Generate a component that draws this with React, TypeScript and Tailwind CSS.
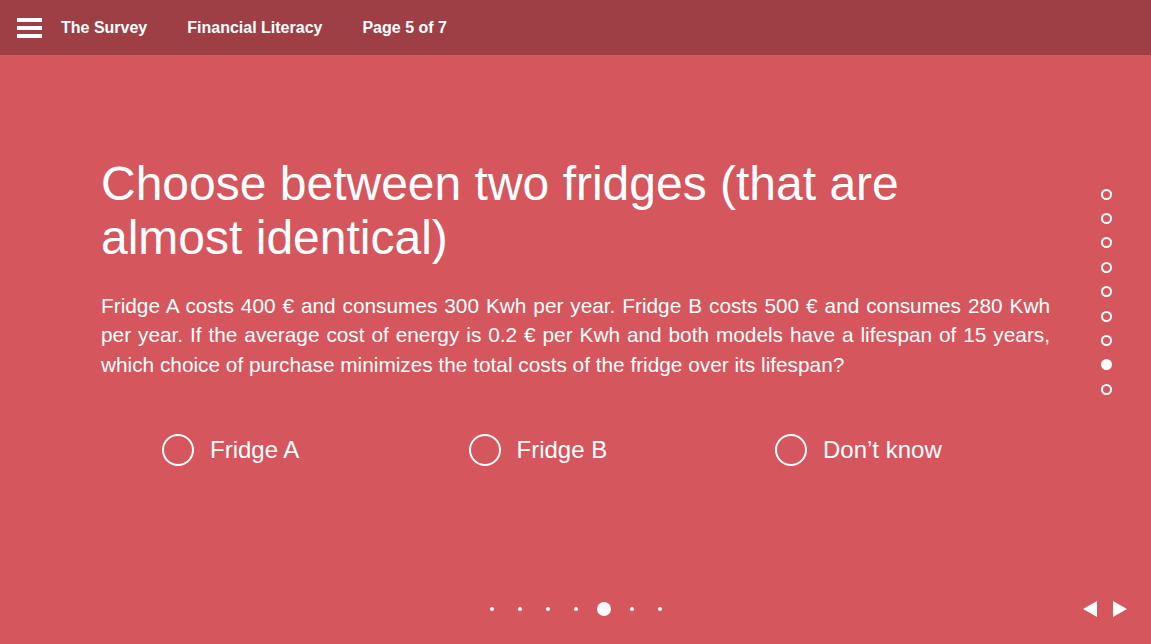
import { useState } from 'react';

const options = ['Fridge A', 'Fridge B', 'Don’t know'];

export default function App() {
  const [selected, setSelected] = useState<number | null>(null);
  const sideDots = 9;
  const activeSide = 7;
  const bottomDots = 7;
  const activeBottom = 4;

  return (
    <div
      className="h-[644px] w-full flex flex-col bg-[#d5565c] text-white overflow-hidden"
      style={{ fontFamily: '"Liberation Sans", Arial, sans-serif' }}
    >
      <header className="h-[55px] shrink-0 bg-[#9e3f46] flex items-center pl-[17px]">
        <button className="flex flex-col gap-[4px] w-[25px]">
          <span className="block h-[4px] w-[25px] bg-white" />
          <span className="block h-[4px] w-[25px] bg-white" />
          <span className="block h-[4px] w-[25px] bg-white" />
        </button>
        <nav className="flex items-center gap-[40px] ml-[19px] text-[16px] font-bold">
          <span>The Survey</span>
          <span>Financial Literacy</span>
          <span>Page 5 of 7</span>
        </nav>
      </header>

      <main className="relative flex-1">
        <section className="px-[101px] pt-[102px]">
          <h1 className="text-[48px] leading-[54px] font-normal">
            Choose between two fridges (that are almost identical)
          </h1>
          <p className="mt-[26px] text-[20.8px] leading-[29.4px] text-justify">
            Fridge A costs 400 € and consumes 300 Kwh per year. Fridge B costs 500 € and consumes 280 Kwh
            per year. If the average cost of energy is 0.2 € per Kwh and both models have a lifespan of 15
            years, which choice of purchase minimizes the total costs of the fridge over its lifespan?
          </p>
          <div className="flex ml-[61px] mt-[55px]">
            {options.map((opt, i) => (
              <label
                key={opt}
                className="w-[306.5px] shrink-0 flex items-center gap-[16px] cursor-pointer"
                onClick={() => setSelected(i)}
              >
                <span className="w-[32px] h-[32px] rounded-full border-2 border-white flex items-center justify-center">
                  {selected === i && <span className="w-[16px] h-[16px] rounded-full bg-white" />}
                </span>
                <span className="text-[24px] leading-[32px]">{opt}</span>
              </label>
            ))}
          </div>
        </section>

        <div className="absolute right-[33px] top-[127px] flex flex-col w-[24px]">
          {Array.from({ length: sideDots }).map((_, i) => (
            <div key={i} className="h-[24.4px] flex items-center justify-center">
              <span
                className={
                  i === activeSide
                    ? 'w-[11px] h-[11px] rounded-full bg-white'
                    : 'w-[11px] h-[11px] rounded-full border-2 border-white'
                }
              />
            </div>
          ))}
        </div>

        <div className="absolute left-0 right-0 bottom-[21px] flex justify-center">
          {Array.from({ length: bottomDots }).map((_, i) => (
            <div key={i} className="w-[28px] h-[28px] flex items-center justify-center">
              <span
                className={
                  i === activeBottom
                    ? 'w-[14px] h-[14px] rounded-full bg-white'
                    : 'w-[4px] h-[4px] rounded-full bg-white'
                }
              />
            </div>
          ))}
        </div>

        <div className="absolute right-[24px] bottom-[27px] flex items-center gap-[16px]">
          <svg width="14" height="16" viewBox="0 0 14 16">
            <path d="M14 0 L0 8 L14 16 Z" fill="white" />
          </svg>
          <svg width="14" height="16" viewBox="0 0 14 16">
            <path d="M0 0 L14 8 L0 16 Z" fill="white" />
          </svg>
        </div>
      </main>
    </div>
  );
}
